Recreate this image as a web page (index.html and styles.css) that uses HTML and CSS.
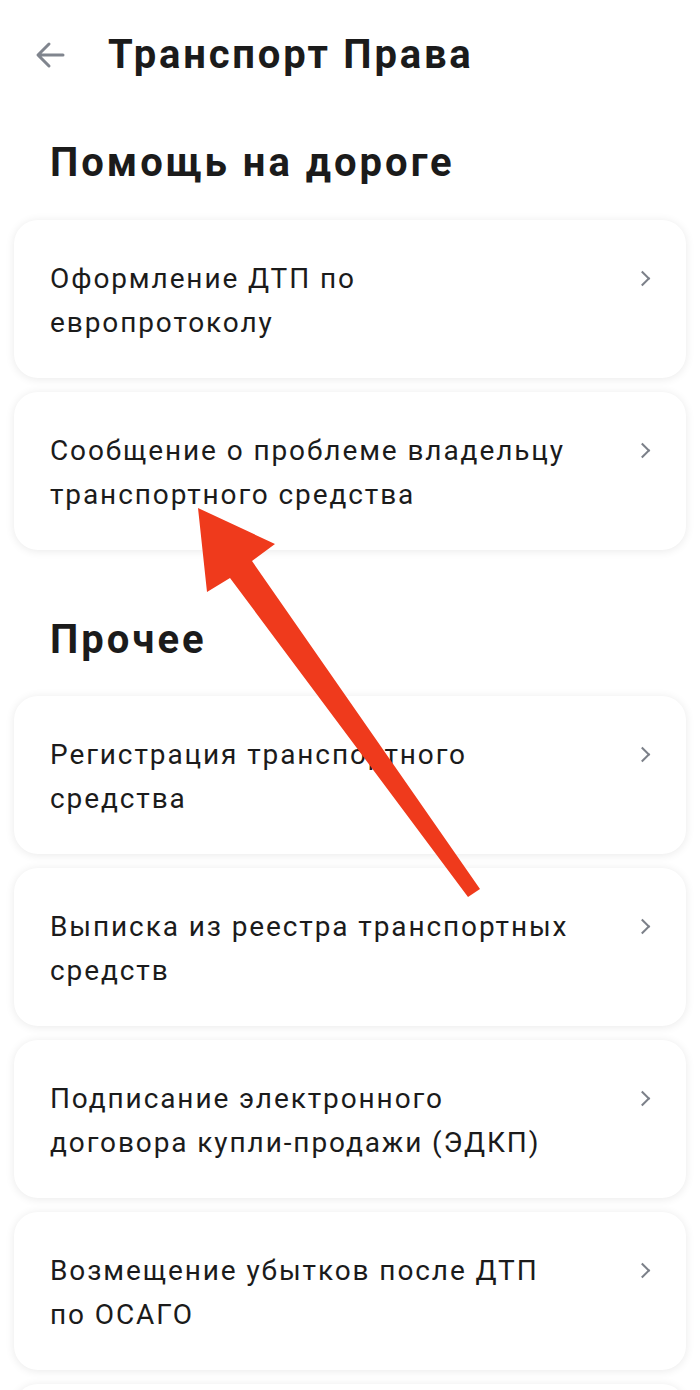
FILE: index.html
```html
<!DOCTYPE html>
<html lang="ru">
<head>
<meta charset="utf-8">
<link rel="stylesheet" href="styles.css">
<title>Транспорт Права</title>
</head>
<body>
<div class="page">
  <header class="topbar">
    <svg class="back" width="32" height="32" viewBox="0 0 32 32" aria-hidden="true">
      <path d="M29 16H5M15 5L4 16l11 11" fill="none" stroke="#80858e" stroke-width="3" stroke-linecap="round" stroke-linejoin="round"/>
    </svg>
    <h1 class="title">Транспорт Права</h1>
  </header>

  <h2 class="section-title">Помощь на дороге</h2>
  <div class="list">
    <div class="card"><div class="card-text">Оформление ДТП по<br>европротоколу</div><span class="chev"></span></div>
    <div class="card"><div class="card-text">Сообщение о проблеме владельцу<br>транспортного средства</div><span class="chev"></span></div>
  </div>

  <h2 class="section-title second">Прочее</h2>
  <div class="list">
    <div class="card"><div class="card-text">Регистрация транспортного<br>средства</div><span class="chev"></span></div>
    <div class="card"><div class="card-text">Выписка из реестра транспортных<br>средств</div><span class="chev"></span></div>
    <div class="card"><div class="card-text">Подписание электронного<br>договора купли-продажи (ЭДКП)</div><span class="chev"></span></div>
    <div class="card"><div class="card-text">Возмещение убытков после ДТП<br>по ОСАГО</div><span class="chev"></span></div>
    <div class="card card-empty"></div>
  </div>

  <svg class="annot" width="700" height="1390" viewBox="0 0 700 1390" aria-hidden="true">
    <polygon points="198,508 275,544 252,561 480,889 468,897 230,578 207,592" fill="#ef3a1c"/>
  </svg>
</div>
</body>
</html>
```

FILE: styles.css
```css
html, body {
  margin: 0;
  padding: 0;
  background: #ffffff;
}
body {
  font-family: Roboto, "Noto Sans", sans-serif;
  color: #1b1b1b;
  overflow: hidden;
  height: 1390px;
}
.page {
  position: relative;
  padding: 0 14px;
}
.topbar {
  display: flex;
  align-items: center;
  height: 110px;
  padding-left: 20px;
  gap: 42px;
}
.back {
  flex: none;
}
.title {
  margin: 0;
  font-size: 40px;
  font-weight: 700;
  line-height: 48px;
  letter-spacing: 2.8px;
  color: #1b1b1b;
}
.section-title {
  margin: 29px 0 33px;
  padding-left: 36px;
  font-size: 40px;
  font-weight: 700;
  line-height: 48px;
  letter-spacing: 3px;
  color: #1b1b1b;
}
.section-title.second {
  margin-top: 66px;
  margin-bottom: 32px;
}
.list {
  display: flex;
  flex-direction: column;
  gap: 14px;
}
.card {
  display: flex;
  align-items: flex-start;
  background: #ffffff;
  border-radius: 24px;
  box-shadow: 0 1px 10px rgba(0, 0, 0, 0.09);
  padding: 37px 36px 33px;
  min-height: 88px;
}
.card-text {
  flex: 1;
  font-size: 28px;
  line-height: 44px;
  letter-spacing: 1.9px;
  color: #1b1b1b;
}
.chev {
  flex: none;
  width: 9px;
  height: 9px;
  margin-top: 16px;
  margin-right: 2px;
  border-right: 2.5px solid #7c8089;
  border-top: 2.5px solid #7c8089;
  transform: rotate(45deg);
}
.annot {
  position: absolute;
  left: 0;
  top: 0;
  pointer-events: none;
}
```
